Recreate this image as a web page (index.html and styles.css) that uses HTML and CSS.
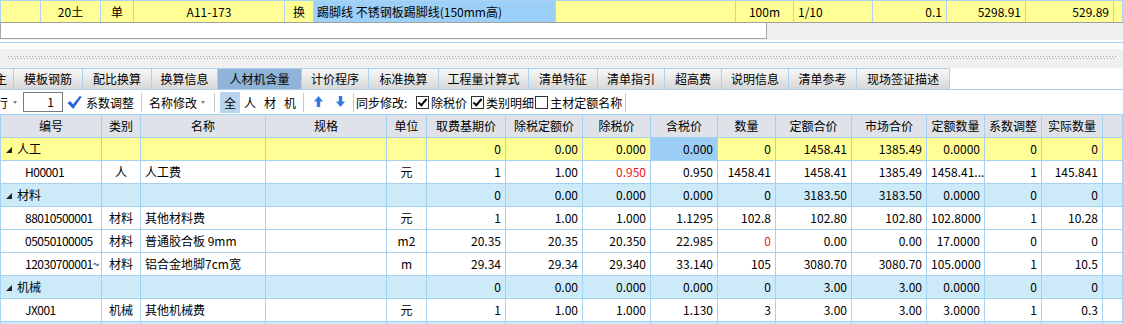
FILE: index.html
```html
<!DOCTYPE html>
<html lang="zh-CN">
<head>
    <meta charset="UTF-8">
    <title>人材机含量</title>
    <link rel="stylesheet" href="styles.css">
</head>
<body>
    <table class="top-row">
        <colgroup>
            <col style="width:40px"><col style="width:60px"><col style="width:33px"><col style="width:151px">
            <col style="width:29px"><col style="width:242px"><col style="width:180px"><col style="width:58px">
            <col style="width:79px"><col style="width:74px"><col style="width:79px"><col style="width:88px"><col>
        </colgroup>
        <tr>
            <td></td>
            <td class="center">20土</td>
            <td class="center">单</td>
            <td class="center">A11-173</td>
            <td class="center">换</td>
            <td class="picked">踢脚线 不锈钢板踢脚线(150mm高)</td>
            <td></td>
            <td class="center">100m</td>
            <td>1/10</td>
            <td class="num">0.1</td>
            <td class="num">5298.91</td>
            <td class="num">529.89</td>
            <td></td>
        </tr>
    </table>

    <div class="edit-bar"><div class="edit-box"></div></div>
    <div class="split">
        <div class="grip"></div>
    </div>

    <div class="tabs">
        <div class="tab tab-cut"><span>主</span></div>
        <div class="tab w69">模板钢筋</div>
        <div class="tab w69">配比换算</div>
        <div class="tab w66">换算信息</div>
        <div class="tab w84 active">人材机含量</div>
        <div class="tab w67">计价程序</div>
        <div class="tab w70">标准换算</div>
        <div class="tab w90">工程量计算式</div>
        <div class="tab w69">清单特征</div>
        <div class="tab w67">清单指引</div>
        <div class="tab w57">超高费</div>
        <div class="tab w67">说明信息</div>
        <div class="tab w68">清单参考</div>
        <div class="tab w93">现场签证描述</div>
    </div>

    <div class="toolbar">
        <span class="cut">行</span>
        <span class="dd"></span>
        <span class="num-box">1</span>
        <svg class="tick" width="15" height="15" viewBox="0 0 15 15">
            <path d="M0.5 8 L3 6 L6 9.2 L13 0.8 L14.6 2 L6.2 14 Z" fill="#2866d2"/>
        </svg>
        <span class="lbl ml4">系数调整</span>
        <span class="sep ml7"></span>
        <span class="lbl ml7">名称修改</span>
        <span class="dd ml4"></span>
        <span class="sep ml9"></span>
        <span class="sel-box">全</span>
        <span class="lbl ml4">人</span>
        <span class="lbl ml8">材</span>
        <span class="lbl ml8">机</span>
        <span class="sep ml7"></span>
        <svg class="arrow ml10" width="9" height="12" viewBox="0 0 9 12">
            <path d="M4.5 0 L9 5.5 L6.2 5.5 L6.2 11 L2.8 11 L2.8 5.5 L0 5.5 Z" fill="#2f7de0"/>
        </svg>
        <svg class="arrow ml13" width="9" height="12" viewBox="0 0 9 12">
            <path d="M4.5 11 L9 5.5 L6.2 5.5 L6.2 0 L2.8 0 L2.8 5.5 L0 5.5 Z" fill="#2f7de0"/>
        </svg>
        <span class="sep ml8"></span>
        <span class="lbl sync">同步修改:</span>
        <span class="box on"></span>
        <span class="lbl ml2">除税价</span>
        <span class="box on ml4"></span>
        <span class="lbl ml2">类别明细</span>
        <span class="box ml1"></span>
        <span class="lbl ml2">主材定额名称</span>
        <span class="sep ml3"></span>
    </div>

    <table class="grid">
        <colgroup>
            <col style="width:101px"><col style="width:39px"><col style="width:125px"><col style="width:121px">
            <col style="width:40px"><col style="width:79px"><col style="width:77px"><col style="width:68px">
            <col style="width:67px"><col style="width:58px"><col style="width:76px"><col style="width:75px">
            <col style="width:58px"><col style="width:57px"><col style="width:61px"><col>
        </colgroup>
        <thead>
            <tr>
                <th>编号</th><th>类别</th><th>名称</th><th>规格</th><th>单位</th><th>取费基期价</th>
                <th>除税定额价</th><th>除税价</th><th>含税价</th><th>数量</th><th>定额合价</th>
                <th>市场合价</th><th>定额数量</th><th>系数调整</th><th>实际数量</th><th></th>
            </tr>
        </thead>
        <tbody>
            <tr class="group yellow">
                <td><span class="fold"></span>人工</td><td></td><td></td><td></td><td></td>
                <td class="num">0</td><td class="num">0.00</td><td class="num">0.000</td><td class="num current">0.000</td>
                <td class="num">0</td><td class="num">1458.41</td><td class="num">1385.49</td><td class="num">0.0000</td>
                <td class="num">0</td><td class="num">0</td><td></td>
            </tr>
            <tr>
                <td class="code">H00001</td><td class="center">人</td><td>人工费</td><td></td><td class="center">元</td>
                <td class="num">1</td><td class="num">1.00</td><td class="num red">0.950</td><td class="num">0.950</td>
                <td class="num">1458.41</td><td class="num">1458.41</td><td class="num">1385.49</td><td class="num">1458.41...</td>
                <td class="num">1</td><td class="num">145.841</td><td></td>
            </tr>
            <tr class="group">
                <td><span class="fold"></span>材料</td><td></td><td></td><td></td><td></td>
                <td class="num">0</td><td class="num">0.00</td><td class="num">0.000</td><td class="num">0.000</td>
                <td class="num">0</td><td class="num">3183.50</td><td class="num">3183.50</td><td class="num">0.0000</td>
                <td class="num">0</td><td class="num">0</td><td></td>
            </tr>
            <tr>
                <td class="code">88010500001</td><td class="center">材料</td><td>其他材料费</td><td></td><td class="center">元</td>
                <td class="num">1</td><td class="num">1.00</td><td class="num">1.000</td><td class="num">1.1295</td>
                <td class="num">102.8</td><td class="num">102.80</td><td class="num">102.80</td><td class="num">102.8000</td>
                <td class="num">1</td><td class="num">10.28</td><td></td>
            </tr>
            <tr>
                <td class="code">05050100005</td><td class="center">材料</td><td>普通胶合板 9mm</td><td></td><td class="center">m2</td>
                <td class="num">20.35</td><td class="num">20.35</td><td class="num">20.350</td><td class="num">22.985</td>
                <td class="num red">0</td><td class="num">0.00</td><td class="num">0.00</td><td class="num">17.0000</td>
                <td class="num">0</td><td class="num">0</td><td></td>
            </tr>
            <tr>
                <td class="code">12030700001~</td><td class="center">材料</td><td>铝合金地脚7cm宽</td><td></td><td class="center">m</td>
                <td class="num">29.34</td><td class="num">29.34</td><td class="num">29.340</td><td class="num">33.140</td>
                <td class="num">105</td><td class="num">3080.70</td><td class="num">3080.70</td><td class="num">105.0000</td>
                <td class="num">1</td><td class="num">10.5</td><td></td>
            </tr>
            <tr class="group">
                <td><span class="fold"></span>机械</td><td></td><td></td><td></td><td></td>
                <td class="num">0</td><td class="num">0.00</td><td class="num">0.000</td><td class="num">0.000</td>
                <td class="num">0</td><td class="num">3.00</td><td class="num">3.00</td><td class="num">0.0000</td>
                <td class="num">0</td><td class="num">0</td><td></td>
            </tr>
            <tr>
                <td class="code">JX001</td><td class="center">机械</td><td>其他机械费</td><td></td><td class="center">元</td>
                <td class="num">1</td><td class="num">1.00</td><td class="num">1.000</td><td class="num">1.130</td>
                <td class="num">3</td><td class="num">3.00</td><td class="num">3.00</td><td class="num">3.0000</td>
                <td class="num">1</td><td class="num">0.3</td><td></td>
            </tr>
            <tr class="group">
                <td></td><td></td><td></td><td></td><td></td><td></td><td></td><td></td>
                <td></td><td></td><td></td><td></td><td></td><td></td><td></td><td></td>
            </tr>
        </tbody>
    </table>
</body>
</html>
```

FILE: styles.css
```css
body {
    margin: 0;
    width: 1123px;
    height: 324px;
    overflow: hidden;
    background: #fff;
    color: #000;
    font-family: "Noto Sans CJK SC", "Noto Sans", sans-serif;
    font-size: 12px;
}

table {
    border-collapse: collapse;
    table-layout: fixed;
    width: 1123px;
}

td, th {
    padding: 0 4px;
    white-space: nowrap;
    overflow: hidden;
    font-weight: normal;
    line-height: 14px;
}

.center {
    text-align: center;
}

.num {
    text-align: right;
}

.red {
    color: #f01818;
}

/* top (quota) row */
.top-row tr {
    height: 22px;
}

.top-row td {
    background: #ffff96;
    border: 1px solid #aad4f2;
    border-bottom-color: #a0a0a0;
}

.top-row td.picked {
    background: #9dd0f8;
    padding-left: 3px;
}

.edit-bar {
    height: 17px;
    background: #f0f0f0;
}

.edit-box {
    width: 765px;
    height: 15px;
    background: #fff;
    border: 1px solid #a6a6a6;
    border-top: none;
}

.split {
    margin-top: 2px;
    border-top: 1px solid #a8d0f0;
    padding-top: 6px;
    background: #fff;
}

.grip {
    height: 19px;
    background-color: #f0f0f0;
    background-image:
        repeating-linear-gradient(90deg, #a8a8a8 0 1px, transparent 1px 3px),
        repeating-linear-gradient(90deg, transparent 0 1px, #a8a8a8 1px 2px, transparent 2px 3px);
    background-size: 1108px 1px, 1108px 1px;
    background-position: 8px 7px, 8px 9px;
    background-repeat: no-repeat;
}

/* tabs */
.tabs {
    display: flex;
    height: 21px;
    border-bottom: 1px solid #a8d0f0;
}

.tab {
    box-sizing: border-box;
    height: 22px;
    border: 1px solid #aad2f0;
    border-left: none;
    background: linear-gradient(#f8f8f8, #d7d7d7);
    text-align: center;
    line-height: 20px;
    flex: none;
}

.tab.active {
    background: #8fb4d7;
}

.tab-cut {
    width: 14px;
    overflow: hidden;
    text-align: left;
}

.tab-cut span {
    margin-left: -5px;
}

.w57 { width: 57px; }
.w66 { width: 66px; }
.w67 { width: 67px; }
.w68 { width: 68px; }
.w69 { width: 69px; }
.w70 { width: 70px; }
.w84 { width: 84px; }
.w90 { width: 90px; }
.w93 { width: 93px; }

/* toolbar */
.toolbar {
    display: flex;
    align-items: center;
    height: 24px;
    overflow: hidden;
}

.toolbar > * {
    flex: none;
}

.cut {
    margin-left: -4px;
}

.dd {
    width: 0;
    height: 0;
    margin-left: 5px;
    border-top: 3px solid #808080;
    border-left: 2.5px solid transparent;
    border-right: 2.5px solid transparent;
}

.num-box {
    box-sizing: border-box;
    width: 40px;
    height: 20px;
    margin-left: 6px;
    border: 1px solid #7a7a7a;
    padding-right: 8px;
    text-align: right;
    line-height: 18px;
}

.tick {
    margin-left: 4px;
}

.sep {
    width: 1px;
    height: 19px;
    background: #c8c8c8;
}

.sel-box {
    width: 20px;
    height: 21px;
    margin-left: 5px;
    background: #b9d5ee;
    text-align: center;
    line-height: 21px;
}

.sync {
    width: 60px;
    margin-left: 2px;
}

.box {
    box-sizing: border-box;
    width: 13px;
    height: 13px;
    border: 1px solid #333;
    background: #fff;
    position: relative;
}

.box.on::after {
    content: "";
    position: absolute;
    left: 3px;
    top: 0;
    width: 3px;
    height: 7px;
    border: solid #000;
    border-width: 0 2px 2px 0;
    transform: rotate(40deg);
}

.ml1 { margin-left: 1px; }
.ml2 { margin-left: 2px; }
.ml3 { margin-left: 3px; }
.ml4 { margin-left: 4px; }
.ml5 { margin-left: 5px; }
.ml7 { margin-left: 7px; }
.ml8 { margin-left: 8px; }
.ml9 { margin-left: 9px; }
.ml10 { margin-left: 10px; }
.ml13 { margin-left: 13px; }

/* resource grid */
.grid th, .grid td {
    border: 1px solid #a6d2f2;
}

.grid thead tr {
    height: 23px;
}

.grid th {
    background: #dfe3e9;
    text-align: center;
}

.grid tbody tr {
    height: 23px;
}

.grid td {
    background: #fff;
}

.grid tr.group td {
    background: #cdeaf8;
}

.grid tr.yellow td {
    background: #ffff96;
}

.grid tr.yellow td.current {
    background: #9bcdf5;
}

.grid td.code {
    padding-left: 24px;
    padding-right: 0;
    letter-spacing: -0.5px;
}

.fold {
    display: inline-block;
    width: 0;
    height: 0;
    margin: 0 5px 0 1px;
    border-left: 6px solid transparent;
    border-bottom: 6px solid #222;
    vertical-align: 1px;
}
```
